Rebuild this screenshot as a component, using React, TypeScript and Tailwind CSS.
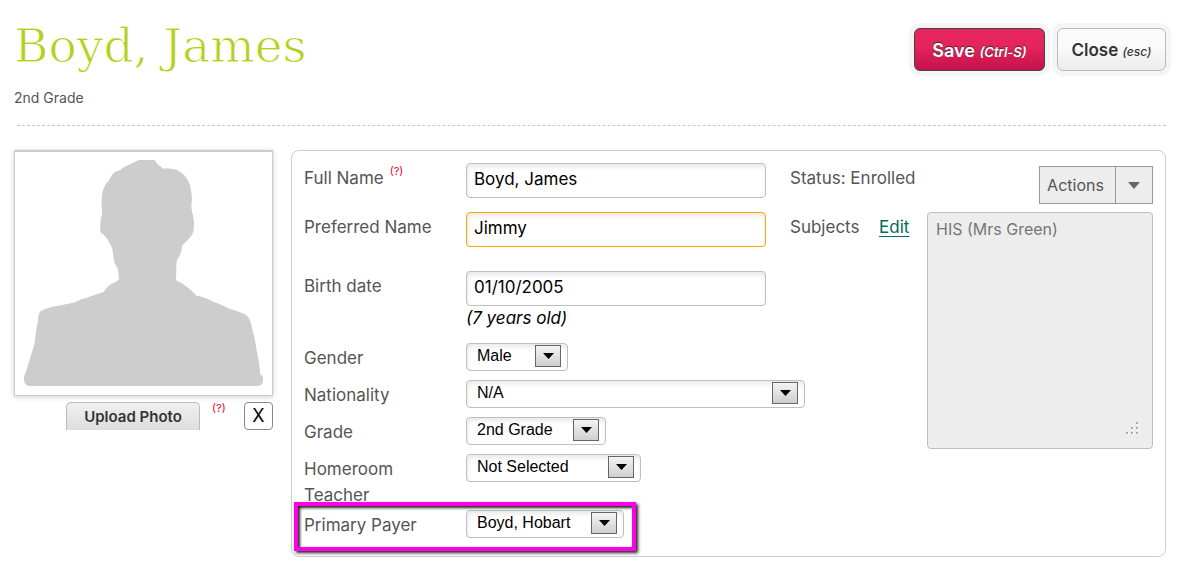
import React from "react";

const inset =
  "rounded border bg-white text-black shadow-[inset_1px_3px_5px_rgba(0,0,0,0.09)]";

function TextField({ id, label, value, hint, active }: { id: string; label: string; value: string; hint?: boolean; active?: boolean }) {
  return (
    <div className="flex items-start">
      <label htmlFor={id} className="flex w-[162px] shrink-0 pt-0.5">
        {label}
        {hint && <span className="ml-1.5 text-[11px] leading-3 text-[#f0001c]">(?)</span>}
      </label>
      <input
        id={id}
        type="text"
        defaultValue={value}
        className={`${inset} ${active ? "border-[#ffa500]" : "border-[#bfbfbf]"} h-[35px] w-[300px] px-[7px] pb-1 text-[17px] outline-none`}
      />
    </div>
  );
}

function SelectField({ id, label, value, width }: { id: string; label: string; value: string; width: string }) {
  return (
    <div className="flex items-start">
      <label htmlFor={id} className="w-[162px] shrink-0 pt-0.5 pr-6">
        {label}
      </label>
      <div className={`relative h-7 shrink-0 ${width}`}>
        <select
          id={id}
          defaultValue={value}
          className={`${inset} block h-full w-full appearance-none border-[#bfbfbf] pr-9 pb-0.5 pl-2.5 font-['Liberation_Sans',sans-serif] text-[16px] leading-5 outline-none`}
        >
          <option>{value}</option>
        </select>
        <span className="pointer-events-none absolute top-0.5 right-[7px] flex h-[22px] w-[26px] items-center justify-center border border-[#666] bg-linear-to-b from-[#f4f4f4] to-[#cfcfcf]">
          <svg width="11" height="6" viewBox="0 0 11 6" aria-hidden="true">
            <path d="M0 0h11L5.5 6z" fill="#000" />
          </svg>
        </span>
      </div>
    </div>
  );
}

function Silhouette() {
  return (
    <svg viewBox="72 60 720 681" className="block w-full" role="img" aria-label="No photo">
      <path
        fill="#cdcdcd"
        d="M418 60H466Q470 72 492 86Q505 84 518 87Q535 88 545 98Q560 108 567 123Q576 140 578 180Q574 200 579 220Q587 245 583 272Q580 288 566 300L548 318Q549 335 540 350Q530 362 531 375L530 422Q548 430 560 440Q575 450 592 469Q615 472 640 486Q665 493 690 508Q708 512 722 519Q745 526 750 538Q757 550 759 565Q770 610 774 640Q780 665 784 706L792 712V722Q792 741 772 741H92Q72 741 72 722V712Q78 700 82 685Q94 645 104 612Q108 570 114 545Q115 518 124 514Q140 506 155 503L222 490Q245 478 262 474L312 458Q322 440 338 432Q350 428 358 420Q358 400 354 385Q342 372 341 350Q341 328 328 308Q320 290 302 278Q301 255 304 235Q309 220 306 200Q304 170 310 150Q316 132 330 118Q338 100 350 94Q365 90 375 80Q395 72 418 60Z"
      />
    </svg>
  );
}

export default function App() {
  return (
    <main className="px-3.5 pb-2 font-[Inter,sans-serif] text-[17px] leading-[26px] text-[#555]">
      <header className="flex items-start justify-between">
        <div className="pt-4">
          <h1 className="font-['DejaVu_Serif',serif] text-[47px] leading-[60px] font-normal text-[#b3d01a] [-webkit-text-stroke:1px_white]">
            Boyd, James
          </h1>
          <p className="pt-3 text-[14px] leading-5">2nd Grade</p>
        </div>
        <div className="flex items-start gap-3 pt-7">
          <button
            type="button"
            className="h-[43px] w-[131px] rounded-md border border-[#444] bg-linear-to-b from-[#e6245e] from-40% to-[#c4114a] pt-[3px] text-[18px] font-semibold text-white shadow-[0_0_0_5px_#f5f5f5] [text-shadow:0_-1px_1px_#333]"
          >
            Save <em className="text-[13px]">(Ctrl-S)</em>
          </button>
          <button
            type="button"
            className="h-[43px] w-[109px] rounded-md border border-[#bbb] bg-linear-to-b from-[#fbfbfb] from-40% to-[#ececec] pt-[3px] text-[17px] font-semibold text-[#333] shadow-[0_0_0_5px_#f5f5f5]"
          >
            Close <em className="text-[12px] font-medium">(esc)</em>
          </button>
        </div>
      </header>

      <hr className="mt-[17px] ml-[3px] border-t border-dashed border-[#c8c8c8]" />

      <div className="mt-6 flex items-start gap-[18px]">
        <section className="w-[259px] shrink-0">
          <div className="border border-t-2 border-[#ccc] bg-white px-[9px] pt-2 pb-[9px] shadow-[0_1px_5px_rgba(0,0,0,0.2)]">
            <Silhouette />
          </div>
          <div className="mt-1.5 flex items-start justify-end">
            <button
              type="button"
              className="h-7 w-[134px] rounded-t-[5px] border border-b-0 border-[#bbb] bg-linear-to-b from-[#f0f0f0] to-[#dedede] text-[15px] font-semibold text-[#333]"
            >
              Upload Photo
            </button>
            <span className="ml-3 w-8 text-[11px] leading-3 text-[#f0001c]">(?)</span>
            <button type="button" aria-label="Remove photo" className="h-7 w-[29px] rounded border border-[#888] bg-white text-[18px] text-black">
              X
            </button>
          </div>
        </section>

        <section className="flex min-w-0 flex-1 items-start gap-6 rounded-lg border border-[#ccc] p-3 pb-[18px]">
          <div className="flex w-[462px] shrink-0 flex-col">
            <div className="flex flex-col gap-3.5">
              <TextField id="full" label="Full Name" value="Boyd, James" hint />
              <TextField id="preferred" label="Preferred Name" value="Jimmy" active />
            </div>
            <div className="mt-6">
              <TextField id="birth" label="Birth date" value="01/10/2005" />
              <em className="block pl-[162px] text-[17px] leading-6 text-black">(7 years old)</em>
            </div>
            <div className="mt-[13px] flex flex-col gap-[9px]">
              <SelectField id="gender" label="Gender" value="Male" width="w-[102px]" />
              <SelectField id="nationality" label="Nationality" value="N/A" width="w-[339px]" />
              <SelectField id="grade" label="Grade" value="2nd Grade" width="w-[140px]" />
              <SelectField id="homeroom" label="Homeroom Teacher" value="Not Selected" width="w-[175px]" />
            </div>
            <div className="relative mt-0.5">
              <SelectField id="payer" label="Primary Payer" value="Boyd, Hobart" width="w-[158px]" />
              <span className="pointer-events-none absolute -top-2 -left-2.5 h-[49px] w-[342px] border-4 border-[#ff00e6] shadow-[2px_2px_3px_#222,inset_2px_2px_3px_#222]" />
            </div>
          </div>

          <div className="flex min-w-0 flex-1 flex-col">
            <div className="flex h-[49px] items-start justify-between pt-0.5">
              <span>Status: Enrolled</span>
              <div className="mt-px flex h-[38px] divide-x divide-[#999] border border-[#999] bg-[#ededed]">
                <button type="button" className="w-[76px] pr-1 text-[16px]">Actions</button>
                <button type="button" aria-label="More actions" className="flex w-9 items-center justify-center">
                  <svg width="12" height="7" viewBox="0 0 12 7" aria-hidden="true">
                    <path d="M0 0h12L6 7z" fill="#666" />
                  </svg>
                </button>
              </div>
            </div>
            <div className="flex items-start">
              <label htmlFor="subjects" className="w-[89px] shrink-0 pt-0.5">Subjects</label>
              <a href="#subjects" className="w-12 shrink-0 pt-0.5 text-[#006b60] underline underline-offset-3">Edit</a>
              <div className="relative min-w-0 flex-1">
                <textarea
                  id="subjects"
                  readOnly
                  defaultValue="HIS (Mrs Green)"
                  className="block h-[237px] w-full resize-none rounded border border-[#bfbfbf] bg-[#ededed] px-2 py-[3px] text-[16px] text-[#777] outline-none"
                />
                <svg className="pointer-events-none absolute right-3.5 bottom-3.5" width="13" height="13" viewBox="0 0 13 13" aria-hidden="true">
                  <path fill="#fff" d="M11 1h2v2h-2zM11 6h2v2h-2zM6 6h2v2H6zM11 11h2v2h-2zM6 11h2v2H6zM1 11h2v2H1z" />
                  <path fill="#aaa" d="M10 0h2v2h-2zM10 5h2v2h-2zM5 5h2v2H5zM10 10h2v2h-2zM5 10h2v2H5zM0 10h2v2H0z" />
                </svg>
              </div>
            </div>
          </div>
        </section>
      </div>
    </main>
  );
}
